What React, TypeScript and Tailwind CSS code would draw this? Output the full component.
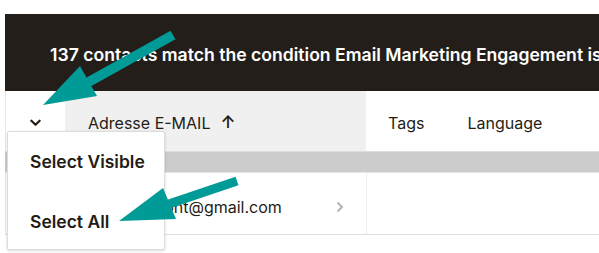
import React from "react";

function Chevron({ className }: { className?: string }) {
  return (
    <svg viewBox="0 0 12 8" className={className} fill="none">
      <path d="M1.5 1.5 L6 6 L10.5 1.5" stroke="currentColor" strokeWidth="2.4" strokeLinecap="round" strokeLinejoin="round" />
    </svg>
  );
}

function Arrows() {
  return (
    <svg className="absolute left-0 top-0 pointer-events-none" width="599" height="253" viewBox="0 0 599 253">
      <g fill="#009b97">
        <line x1="173" y1="35" x2="85" y2="84" stroke="#009b97" strokeWidth="10" />
        <polygon points="43,105 80,66 97,96" />
        <line x1="237" y1="181" x2="160" y2="207" stroke="#009b97" strokeWidth="9" />
        <polygon points="119,221 163,188 176,219" />
      </g>
    </svg>
  );
}

export default function App() {
  const font = { fontFamily: "Inter, 'Open Sans', sans-serif" };
  return (
    <div className="relative w-[599px] h-[253px] bg-white overflow-hidden text-[#241c15]" style={font}>
      <div className="pt-[14px] pl-[5px]">
        <div className="h-[77px] bg-[#241e1a] flex items-center pl-[45px] pt-[6px] whitespace-nowrap overflow-hidden">
          <span className="text-white font-semibold text-[17.6px] tracking-[0px]">
            137 contacts match the condition Email Marketing Engagement is{" "}
            <span className="text-[#4ab4f0]">Low</span>
          </span>
        </div>
        <div className="flex h-[61px] border-b border-[#dedede]">
          <div className="w-[60px] shrink-0 bg-white border-l border-[#e8e8e8] flex items-center justify-center pt-[3px]">
            <Chevron className="w-[11px] h-[8px] text-[#241c15]" />
          </div>
          <div className="w-[301px] shrink-0 bg-[#f0f0f0] flex items-center pl-[23px] pt-[3px] text-[16px]">
            Adresse E-MAIL <span className="ml-[10px] text-[17px] font-semibold">↑</span>
          </div>
          <div className="flex-1 flex items-center pl-[22px] pt-[3px] text-[16px] gap-[43px]">
            <span>Tags</span>
            <span>Language</span>
          </div>
        </div>
        <div className="h-[21px] bg-[#cccccc] border-b border-[#e6e6e6]" />
        <div className="flex h-[62px] border-b border-[#e0e0e0]">
          <div className="w-[60px] shrink-0 border-l border-[#e8e8e8]" />
          <div className="w-[301px] shrink-0 flex items-center pl-[23px] pr-[22px] pt-[6px] justify-between text-[16px]">
            <span>marie.dupont@gmail.com</span>
            <svg viewBox="0 0 8 12" className="w-[8px] h-[12px]" fill="none">
              <path d="M1.5 1.5 L6 6 L1.5 10.5" stroke="#b5b5b5" strokeWidth="2" />
            </svg>
          </div>
          <div className="flex-1 border-l border-[#ececec]" />
        </div>
      </div>

      <div className="absolute left-[7px] top-[131px] w-[158px] h-[119px] bg-white border border-[#dcdcdc] rounded-[2px] shadow-[0_1px_3px_rgba(0,0,0,0.15)] flex flex-col pl-[22px] pt-[19px] gap-[38px]">
        <div className="font-semibold text-[17.5px] leading-[22px]">Select Visible</div>
        <div className="font-semibold text-[17.5px] leading-[22px]">Select All</div>
      </div>

      <Arrows />
    </div>
  );
}
